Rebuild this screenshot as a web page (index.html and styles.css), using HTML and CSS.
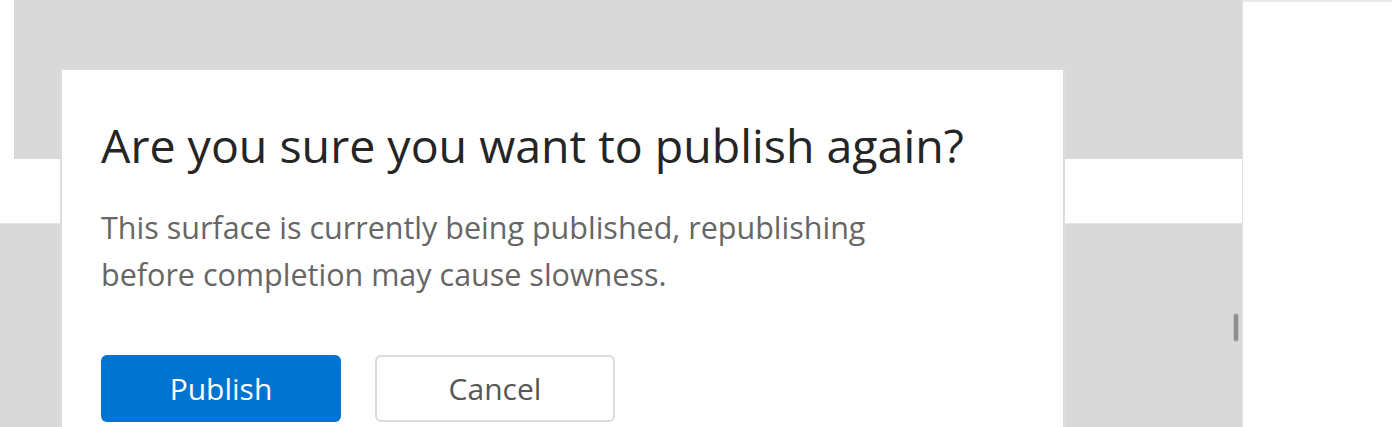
FILE: index.html
```html
<!DOCTYPE html>
<html lang="en">
<head>
<meta charset="utf-8">
<title>Publish again</title>
<link rel="stylesheet" href="styles.css">
</head>
<body>
<div class="app">
  <div class="canvas">
    <div class="canvas-top"></div>
    <div class="band"></div>
    <div class="canvas-bottom"></div>
    <div class="scroll-thumb"></div>
  </div>
  <div class="side"></div>
</div>
<div class="dialog" role="dialog" aria-labelledby="dlg-title">
  <h1 class="dialog-title" id="dlg-title">Are you sure you want to publish again?</h1>
  <p class="dialog-text">This surface is currently being published, republishing before completion may cause slowness.</p>
  <div class="dialog-actions">
    <button class="btn btn-primary" type="button">Publish</button>
    <button class="btn btn-secondary" type="button">Cancel</button>
  </div>
</div>
</body>
</html>
```

FILE: styles.css
```css
html, body {
  margin: 0;
  padding: 0;
}

body {
  width: 1392px;
  height: 427px;
  overflow: hidden;
  background: #ffffff;
  font-family: "Open Sans", "Noto Sans", "Liberation Sans", sans-serif;
  position: relative;
}

.app {
  display: flex;
  height: 427px;
}

.canvas {
  position: relative;
  width: 1242px;
  display: flex;
  flex-direction: column;
}

.canvas-top {
  height: 159px;
  margin-left: 14px;
  background: #d9d9d9;
}

.band {
  height: 65px;
  box-sizing: border-box;
  background: #ffffff;
  border-bottom: 1px solid #e4e4e4;
}

.canvas-bottom {
  flex: 1;
  background: #d9d9d9;
}

.scroll-thumb {
  position: absolute;
  left: 1233px;
  top: 313px;
  width: 4px;
  height: 27px;
  background: #8e8e8e;
  border: 1px solid #c4c4c4;
  border-radius: 3px;
}

.side {
  flex: 1;
  background: #ffffff;
  border-left: 1px solid #e2e2e2;
  border-top: 2px solid #e8e8e8;
}

.dialog {
  position: absolute;
  left: 62px;
  top: 70px;
  width: 1001px;
  height: 357px;
  overflow: hidden;
  box-sizing: border-box;
  padding: 45px 39px 0;
  background: #ffffff;
  box-shadow: 0 0 0 2px #dddddd;
}

.dialog-title {
  margin: 0;
  font-size: 46.5px;
  line-height: 60px;
  font-weight: 400;
  color: #252525;
}

.dialog-text {
  margin: 29px 0 0;
  max-width: 820px;
  font-size: 30.5px;
  line-height: 47px;
  color: #666666;
}

.dialog-actions {
  display: flex;
  gap: 34px;
  margin-top: 57px;
}

.btn {
  width: 240px;
  height: 67px;
  box-sizing: border-box;
  border-radius: 6px;
  font-family: inherit;
  font-size: 30px;
  line-height: 1;
  padding: 0;
  cursor: pointer;
}

.btn-primary {
  background: #0173d0;
  color: #ffffff;
  border: none;
}

.btn-secondary {
  background: #ffffff;
  color: #565656;
  border: 2px solid #dadada;
}
```
